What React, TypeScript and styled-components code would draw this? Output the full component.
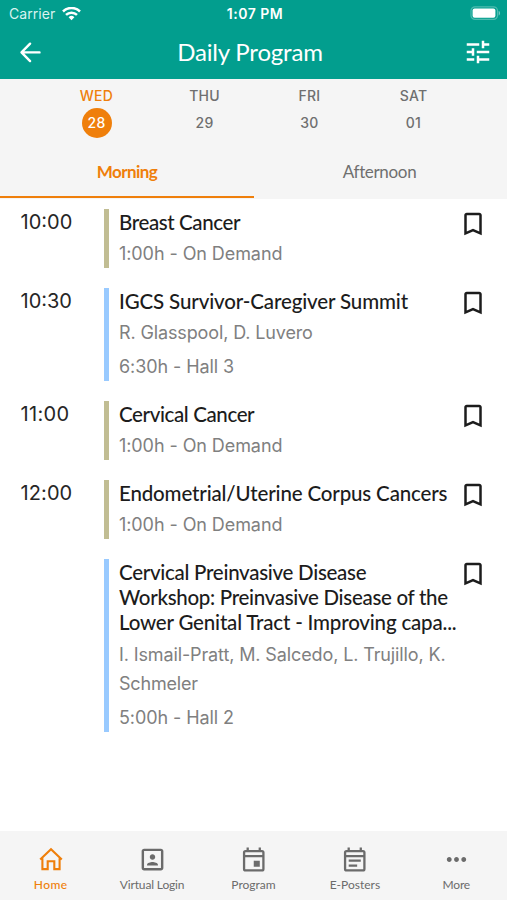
import React from "react";
import styled, { createGlobalStyle, css } from "styled-components";
import { MdTune, MdBookmarkBorder, MdMoreHoriz, MdPortrait } from "react-icons/md";

const orange = "#ef7f0b";
const teal = "#029e8e";
const grey = "#6f6f6f";
const humanist = `Lato, "Open Sans", sans-serif`;
const system = `Inter, "Liberation Sans", sans-serif`;

const GlobalStyle = createGlobalStyle`
  * { box-sizing: border-box; }
  body { margin: 0; background: #fff; }
  button { border: 0; padding: 0; background: none; font: inherit; color: inherit; }
  svg { flex: none; }
`;

const Screen = styled.div`
  display: flex;
  flex-direction: column;
  width: 507px;
  height: 900px;
  overflow: hidden;
  background: #fff;
  font-family: ${system};
`;

const Header = styled.header`
  flex: none;
  height: 79px;
  background: ${teal};
  color: #fff;
`;

const StatusBar = styled.div`
  display: grid;
  grid-template-columns: 1fr auto 1fr;
  align-items: center;
  height: 27px;
  padding: 0 6px 0 9px;
  font-size: 14px;
  line-height: 27px;
`;

const Carrier = styled.div`
  display: flex;
  align-items: center;
  gap: 7px;
  color: #d9f3f0;
  letter-spacing: 0.06px;
`;

const Clock = styled.div`
  font-weight: 600;
  font-size: 14px;
  letter-spacing: 0.5px;
`;

const Battery = styled.div`
  display: flex;
  justify-content: flex-end;
`;

const TitleBar = styled.div`
  display: grid;
  grid-template-columns: 48px 1fr 48px;
  align-items: center;
  height: 50px;
  padding: 0 5px 0 6px;
`;

const IconButton = styled.button`
  display: flex;
  justify-content: center;
`;

const Title = styled.h1`
  margin: 0;
  padding-right: 8px;
  text-align: center;
  font: 400 24px/50px ${humanist};
  letter-spacing: -0.18px;
`;

const Filters = styled.div`
  flex: none;
  height: 120px;
  background: #f5f5f5;
`;

const Days = styled.div`
  display: grid;
  grid-template-columns: 88px 128px 82px 126px;
  justify-content: center;
  height: 67px;
  padding: 8px 0 0 22px;
`;

const Day = styled.div`
  display: flex;
  flex-direction: column;
  align-items: center;
  color: ${grey};
  font-size: 14px;
  font-weight: 500;
  line-height: 18px;
  letter-spacing: 0.25px;
`;

const DayName = styled.span<{ $active?: boolean }>`
  ${(p) => p.$active && css`color: ${orange};`}
`;

const DayNumber = styled.span<{ $active?: boolean }>`
  display: flex;
  align-items: center;
  justify-content: center;
  width: 30px;
  height: 30px;
  margin-top: 3px;
  border-radius: 50%;
  ${(p) => p.$active && css`background: ${orange}; color: #fff;`}
`;

const Tabs = styled.div`
  display: grid;
  grid-template-columns: 254px 251px;
  height: 53px;
`;

const Tab = styled.button<{ $active?: boolean }>`
  height: 52px;
  padding-top: 2px;
  border-bottom: 2px solid ${(p) => (p.$active ? orange : "transparent")};
  color: ${(p) => (p.$active ? orange : grey)};
  font: ${(p) => (p.$active ? 700 : 400)} 17px/48px ${humanist};
  letter-spacing: ${(p) => (p.$active ? "-0.55px" : "-0.33px")};
`;

const Agenda = styled.main`
  display: flex;
  flex: 1;
  flex-direction: column;
  gap: 19.7px;
  padding-top: 9.8px;
`;

const Session = styled.article`
  display: grid;
  grid-template-columns: 104px 356px 25px;
`;

const Time = styled.time<{ $spacing?: number }>`
  padding: 1px 0 0 20.5px;
  color: #262626;
  font-size: 20px;
  line-height: 25px;
  letter-spacing: ${(p) => p.$spacing ?? 0}px;
`;

const Details = styled.div<{ $tone: string }>`
  padding: 1px 0 0 10px;
  border-left: 5px solid ${(p) => p.$tone};
  white-space: nowrap;
`;

const TitleLine = styled.div<{ $spacing: number }>`
  color: #1c1c1c;
  font: 500 20.5px/25.3px ${humanist};
  letter-spacing: ${(p) => p.$spacing}px;
`;

const Meta = styled.div`
  margin-top: 4px;
  color: #808080;
  font-size: 18px;
  line-height: 29px;

  & + & {
    margin-top: 5px;
  }
`;

const MetaLine = styled.div<{ $spacing: number }>`
  letter-spacing: ${(p) => p.$spacing}px;
`;

const BookmarkButton = styled.button`
  display: flex;
  justify-content: center;
  width: 25px;
  height: 30px;
  color: #1c1c1c;
`;

const TabBar = styled.nav`
  display: grid;
  grid-template-columns: repeat(5, 1fr);
  flex: none;
  height: 69px;
  background: #f5f5f5;
`;

const NavItem = styled.button<{ $active?: boolean; $spacing: number }>`
  display: flex;
  flex-direction: column;
  align-items: center;
  gap: 3px;
  padding-top: 14px;
  color: ${(p) => (p.$active ? orange : "#6b6b6b")};
  font: ${(p) => (p.$active ? 500 : 400)} 12px/16px ${humanist};
  letter-spacing: ${(p) => p.$spacing}px;
  white-space: nowrap;
`;

const BackIcon = () => (
  <svg width="22" height="22" viewBox="0 0 22 22" fill="none" stroke="currentColor" strokeWidth="2.4" strokeLinecap="round" strokeLinejoin="round">
    <path d="M20.5 11.4H2.8M11.1 2.7 2.5 11.4l8.6 8.7" />
  </svg>
);

const WifiIcon = () => (
  <svg width="19" height="14" viewBox="0 0 19 14" fill="none" stroke="#fff" strokeWidth="2.5">
    <path d="M1 4.5a12 12 0 0 1 17 0M4 7.9a7.8 7.8 0 0 1 11 0" />
    <path d="M9.5 13.2 6.6 10.3a4.1 4.1 0 0 1 5.8 0z" fill="#fff" stroke="none" />
  </svg>
);

const BatteryIcon = () => (
  <svg width="31" height="15" viewBox="0 0 31 15">
    <rect x="1" y="0.8" width="26.5" height="12.6" rx="4" fill="none" stroke="#fff" strokeOpacity=".3" strokeWidth="1.2" />
    <rect x="2.6" y="2.5" width="22.8" height="9.2" rx="2" fill="#fff" />
    <path d="M28.7 4.8v4.8c1.8-.7 1.8-4.1 0-4.8z" fill="#fff" fillOpacity=".45" />
  </svg>
);

const HomeIcon = () => (
  <svg width="29" height="29" viewBox="0 0 29 29" fill="none" stroke="currentColor" strokeWidth="2.1">
    <path d="M4.2 14.6 15 4.2l10.8 10.4M6.4 13.2v10.9h5.3v-7.9h6.6v7.9h5.3V13.2" />
  </svg>
);

const CalendarIcon = ({ note }: { note?: boolean }) => (
  <svg width="29" height="29" viewBox="0 0 24 24" fill="none" stroke="currentColor" strokeWidth="1.9">
    <rect x="4.2" y="5" width="16" height="16" rx="1.2" />
    <path d="M4.2 9.2h16M7.2 2v3M17.2 2v3" />
    {note ? <path d="M7.2 13h10M7.2 17h7" /> : <path d="M12.2 13h5v5h-5z" fill="currentColor" stroke="none" />}
  </svg>
);

const olive = "#c1bd93";
const blue = "#99caff";

type Line = [text: string, spacing: number];

type SessionData = {
  time?: string;
  timeSpacing?: number;
  tone: string;
  title: Line[];
  meta: Line[][];
};

const onDemand: Line[][] = [[["1:00h - On Demand", -0.08]]];

const sessions: SessionData[] = [
  { time: "10:00", tone: olive, title: [["Breast Cancer", -0.4]], meta: onDemand },
  {
    time: "10:30",
    tone: blue,
    title: [["IGCS Survivor-Caregiver Summit", -0.13]],
    meta: [[["R. Glasspool, D. Luvero", -0.13]], [["6:30h - Hall 3", -0.08]]],
  },
  { time: "11:00", timeSpacing: 0.35, tone: olive, title: [["Cervical Cancer", -0.38]], meta: onDemand },
  { time: "12:00", timeSpacing: 0.1, tone: olive, title: [["Endometrial/Uterine Corpus Cancers", -0.15]], meta: onDemand },
  {
    tone: blue,
    title: [
      ["Cervical Preinvasive Disease", -0.28],
      ["Workshop: Preinvasive Disease of the", -0.3],
      ["Lower Genital Tract - Improving capa...", -0.18],
    ],
    meta: [
      [["I. Ismail-Pratt, M. Salcedo, L. Trujillo, K.", -0.12], ["Schmeler", -0.2]],
      [["5:00h - Hall 2", -0.08]],
    ],
  },
];

const days = [
  { name: "WED", number: "28", active: true },
  { name: "THU", number: "29" },
  { name: "FRI", number: "30" },
  { name: "SAT", number: "01" },
];

const navItems = [
  { label: "Home", icon: <HomeIcon />, active: true, spacing: 0.4 },
  { label: "Virtual Login", icon: <MdPortrait size={29} />, spacing: -0.15 },
  { label: "Program", icon: <CalendarIcon />, spacing: 0 },
  { label: "E-Posters", icon: <CalendarIcon note />, spacing: 0 },
  { label: "More", icon: <MdMoreHoriz size={29} />, spacing: -0.2 },
];

export default function App() {
  return (
    <Screen>
      <GlobalStyle />
      <Header>
        <StatusBar>
          <Carrier>Carrier <WifiIcon /></Carrier>
          <Clock>1:07 PM</Clock>
          <Battery><BatteryIcon /></Battery>
        </StatusBar>
        <TitleBar>
          <IconButton aria-label="Back"><BackIcon /></IconButton>
          <Title>Daily Program</Title>
          <IconButton aria-label="Filter"><MdTune size={30} /></IconButton>
        </TitleBar>
      </Header>
      <Filters>
        <Days>
          {days.map((d) => (
            <Day key={d.name}>
              <DayName $active={d.active}>{d.name}</DayName>
              <DayNumber $active={d.active}>{d.number}</DayNumber>
            </Day>
          ))}
        </Days>
        <Tabs>
          <Tab $active>Morning</Tab>
          <Tab>Afternoon</Tab>
        </Tabs>
      </Filters>
      <Agenda>
        {sessions.map((s) => (
          <Session key={s.title[0][0]}>
            <Time $spacing={s.timeSpacing}>{s.time}</Time>
            <Details $tone={s.tone}>
              {s.title.map(([text, spacing]) => (
                <TitleLine key={text} $spacing={spacing}>{text}</TitleLine>
              ))}
              {s.meta.map((rows) => (
                <Meta key={rows[0][0]}>
                  {rows.map(([text, spacing]) => (
                    <MetaLine key={text} $spacing={spacing}>{text}</MetaLine>
                  ))}
                </Meta>
              ))}
            </Details>
            <BookmarkButton aria-label="Bookmark"><MdBookmarkBorder size={30} /></BookmarkButton>
          </Session>
        ))}
      </Agenda>
      <TabBar>
        {navItems.map((n) => (
          <NavItem key={n.label} $active={n.active} $spacing={n.spacing}>
            {n.icon}
            {n.label}
          </NavItem>
        ))}
      </TabBar>
    </Screen>
  );
}
